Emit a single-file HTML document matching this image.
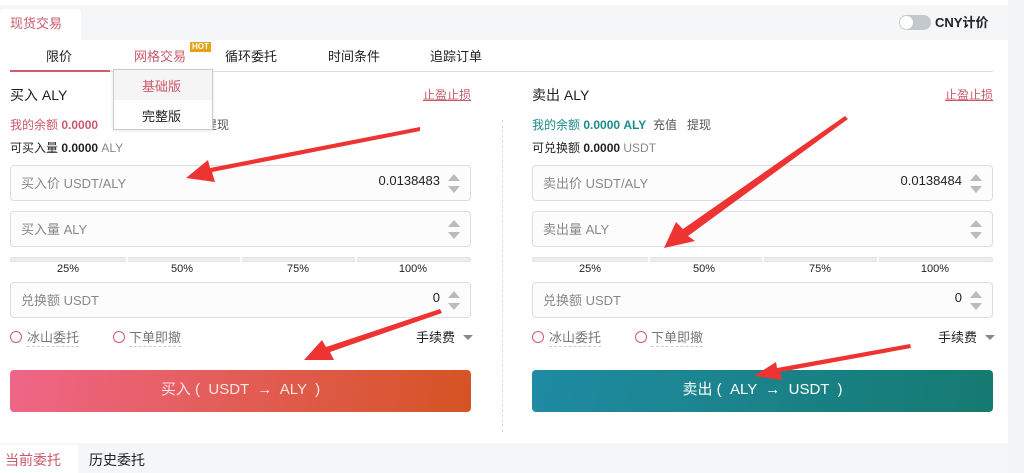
<!DOCTYPE html>
<html><head><meta charset="utf-8"><style>
*{margin:0;padding:0;box-sizing:border-box}
body{width:1024px;height:473px;overflow:hidden;background:#fff;font-family:"Liberation Sans","Noto Sans CJK SC",sans-serif;font-size:13px;color:#222;position:relative}
.a{position:absolute;white-space:nowrap}
.inp{position:absolute;height:36px;border:1px solid #ddd;border-radius:4px;background:#fcfcfc}
.inp .l{position:absolute;left:10px;top:7px;color:#888;font-size:13px}
.inp .v{position:absolute;right:30px;top:7px;color:#222;font-size:13px}
.spin{position:absolute;right:10px;top:8px;width:0;height:0;border-left:6px solid transparent;border-right:6px solid transparent;border-bottom:7px solid #bbb}
.spin2{position:absolute;right:10px;top:20px;width:0;height:0;border-left:6px solid transparent;border-right:6px solid transparent;border-top:7px solid #bbb}
.bar{position:absolute;height:5px;background:#eee;border:1px solid #e2e2e2;border-radius:2px}
.bar i{position:absolute;top:-1px;width:2px;height:5px;background:#fff}
.pct{position:absolute;font-size:11px;color:#222;width:60px;text-align:center}
.rad{position:absolute;width:12px;height:12px;border:1.5px solid #d4596a;border-radius:50%}
.dl{border-bottom:1px dashed #ccc;color:#777}
</style></head><body>
<div class="a" style="left:0;top:5px;width:1008px;height:35px;background:#f5f6f8"></div>
<div class="a" style="left:0;top:9px;width:81px;height:31px;background:#fff;border-radius:4px 4px 0 0"></div>
<div class="a" style="left:10px;top:13px;color:#c9596a;font-size:13px">现货交易</div>
<div class="a" style="left:899px;top:15px;width:32px;height:15px;border-radius:8px;background:#c3c8ce"></div>
<div class="a" style="left:900px;top:16px;width:13px;height:13px;border-radius:50%;background:#fff"></div>
<div class="a" style="left:935px;top:12px;font-size:13px;color:#222;font-weight:bold">CNY计价</div>
<div class="a" style="left:1008px;top:0;width:16px;height:473px;background:#f2f3f5"></div>

<div class="a" style="left:10px;top:71px;width:983px;height:1px;background:#ddd"></div>
<div class="a" style="left:10px;top:70px;width:100px;height:2px;background:#d4596a"></div>
<div class="a" style="left:46px;top:46px">限价</div>
<div class="a" style="left:134px;top:46px;color:#c9596a">网格交易</div>
<div class="a" style="left:190px;top:42px;background:#e6a317;color:#fff;font-size:8px;font-weight:bold;padding:0 2px;line-height:10px">HOT</div>
<div class="a" style="left:225px;top:46px">循环委托</div>
<div class="a" style="left:328px;top:46px">时间条件</div>
<div class="a" style="left:430px;top:46px">追踪订单</div>

<div class="a" style="left:10px;top:85px;font-size:14px">买入 ALY</div>
<div class="a" style="left:423px;top:86px;font-size:12px;color:#c9596a;text-decoration:underline">止盈止损</div>
<div class="a" style="left:10px;top:116px;font-size:12px;color:#c9596a">我的余额 <b>0.0000</b></div>
<div class="a" style="left:205px;top:116px;font-size:12px;color:#555">提现</div>
<div class="a" style="left:10px;top:139px;font-size:12px">可买入量 <b>0.0000</b> <span style="color:#888">ALY</span></div>

<div class="a" style="left:113px;top:69px;width:100px;height:61px;background:#fff;border:1px solid #ccc;box-shadow:0 1px 3px rgba(0,0,0,.1)"></div>
<div class="a" style="left:114px;top:70px;width:98px;height:30px;background:#f5f5f5"></div>
<div class="a" style="left:142px;top:76px;color:#c9596a">基础版</div>
<div class="a" style="left:142px;top:106px">完整版</div>

<div class="inp" style="left:10px;top:165px;width:461px"><span class="l">买入价 USDT/ALY</span><span class="v">0.0138483</span><i class="spin"></i><i class="spin2"></i></div>
<div class="inp" style="left:10px;top:211px;width:461px"><span class="l">买入量 ALY</span><i class="spin"></i><i class="spin2"></i></div>
<div class="bar" style="left:10px;top:257px;width:461px"><i style="left:115px"></i><i style="left:229px"></i><i style="left:344px"></i></div>
<div class="pct" style="left:38px;top:263px">25%</div><div class="pct" style="left:152px;top:263px">50%</div><div class="pct" style="left:268px;top:263px">75%</div><div class="pct" style="left:383px;top:263px">100%</div>
<div class="inp" style="left:10px;top:282px;width:461px"><span class="l">兑换额 USDT</span><span class="v">0</span><i class="spin"></i><i class="spin2"></i></div>
<div class="rad" style="left:10px;top:331px"></div><div class="a dl" style="left:27px;top:327px">冰山委托</div>
<div class="rad" style="left:113px;top:331px"></div><div class="a dl" style="left:129px;top:327px">下单即撤</div>
<div class="a" style="left:416px;top:327px">手续费</div>
<div class="a" style="left:463px;top:335px;border-left:5px solid transparent;border-right:5px solid transparent;border-top:5px solid #888"></div>
<div class="a" style="left:10px;top:370px;width:461px;height:42px;border-radius:4px;background:linear-gradient(100deg,#ef6688,#d65323);color:#fbe5e5;font-size:15px;text-align:center;line-height:40px">买入 (&nbsp; USDT &nbsp;→&nbsp; ALY &nbsp;)</div>

<div class="a" style="left:502px;top:120px;height:312px;border-left:1px dashed #ddd"></div>

<div class="a" style="left:532px;top:85px;font-size:14px">卖出 ALY</div>
<div class="a" style="left:945px;top:86px;font-size:12px;color:#c9596a;text-decoration:underline">止盈止损</div>
<div class="a" style="left:532px;top:116px;font-size:12px;color:#1a8a8a">我的余额 <b>0.0000 ALY</b> <span style="color:#555">&nbsp;充值 &nbsp; 提现</span></div>
<div class="a" style="left:532px;top:139px;font-size:12px">可兑换额 <b>0.0000</b> <span style="color:#888">USDT</span></div>
<div class="inp" style="left:532px;top:165px;width:461px"><span class="l">卖出价 USDT/ALY</span><span class="v">0.0138484</span><i class="spin"></i><i class="spin2"></i></div>
<div class="inp" style="left:532px;top:211px;width:461px"><span class="l">卖出量 ALY</span><i class="spin"></i><i class="spin2"></i></div>
<div class="bar" style="left:532px;top:257px;width:461px"><i style="left:115px"></i><i style="left:229px"></i><i style="left:344px"></i></div>
<div class="pct" style="left:560px;top:263px">25%</div><div class="pct" style="left:674px;top:263px">50%</div><div class="pct" style="left:790px;top:263px">75%</div><div class="pct" style="left:905px;top:263px">100%</div>
<div class="inp" style="left:532px;top:282px;width:461px"><span class="l">兑换额 USDT</span><span class="v">0</span><i class="spin"></i><i class="spin2"></i></div>
<div class="rad" style="left:532px;top:331px"></div><div class="a dl" style="left:549px;top:327px">冰山委托</div>
<div class="rad" style="left:635px;top:331px"></div><div class="a dl" style="left:651px;top:327px">下单即撤</div>
<div class="a" style="left:938px;top:327px">手续费</div>
<div class="a" style="left:985px;top:335px;border-left:5px solid transparent;border-right:5px solid transparent;border-top:5px solid #888"></div>
<div class="a" style="left:532px;top:370px;width:461px;height:42px;border-radius:4px;background:linear-gradient(100deg,#1f8ba3,#157a70);color:#fff;font-size:15px;text-align:center;line-height:40px">卖出 (&nbsp; ALY &nbsp;→&nbsp; USDT &nbsp;)</div>

<div class="a" style="left:0;top:443px;width:1008px;height:30px;background:#f5f6f8"></div>
<div class="a" style="left:0;top:445px;width:78px;height:28px;background:#fff"></div>
<div class="a" style="left:5px;top:450px;color:#c9596a;font-size:14px">当前委托</div>
<div class="a" style="left:89px;top:450px;font-size:14px">历史委托</div>

<svg class="a" style="left:0;top:0" width="1024" height="473">
<g fill="#ee3333">
<polygon points="420,127 420,131 212,172 215,182 186,178 208,160 210,168"/>
<polygon points="845,116 848,119 688,236 695,241 664,248 676,222 683,229"/>
<polygon points="440,309 442,313 330,352 334,360 304,360 322,340 326,347"/>
<polygon points="910,344 911,348 780,372 782,380 754,376 776,362 777,368"/>
</g></svg>
</body></html>
